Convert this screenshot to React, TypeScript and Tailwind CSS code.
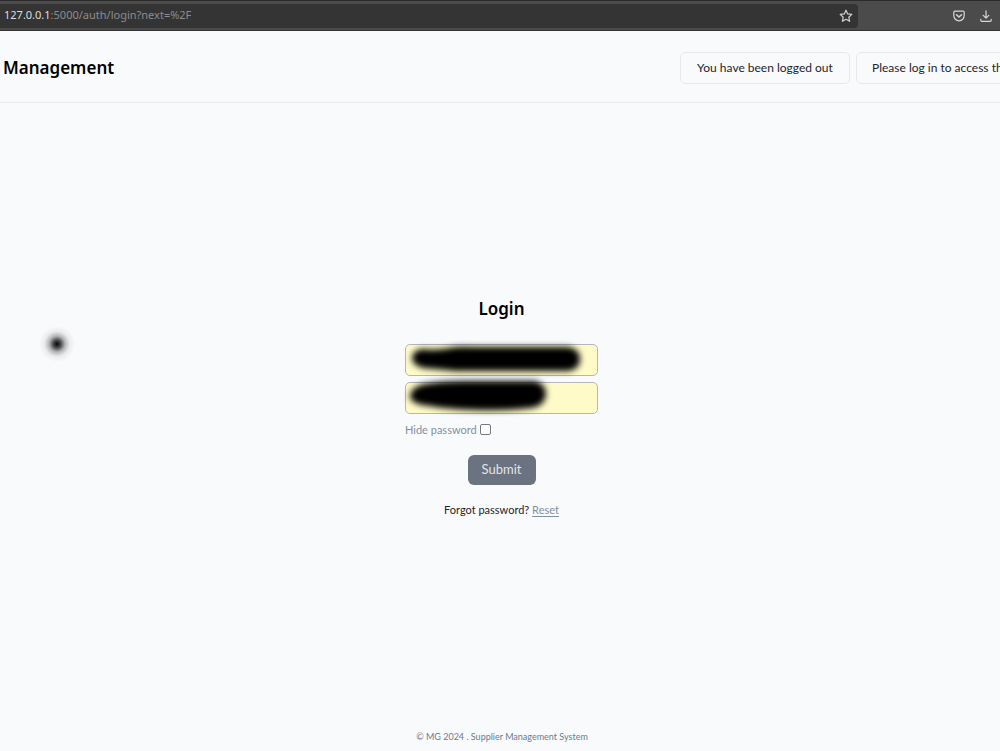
import { useState } from "react";

function StarIcon() {
  return (
    <svg width="14" height="14" viewBox="0 0 14 14" fill="none" stroke="#d2d2d2" strokeWidth="1.2" strokeLinejoin="round" aria-hidden="true">
      <path d="M7 1.2 8.7 4.9 12.8 5.4 9.8 8.2 10.6 12.3 7 10.3 3.4 12.3 4.2 8.2 1.2 5.4 5.3 4.9Z" />
    </svg>
  );
}

function PocketIcon() {
  return (
    <svg width="12" height="12" viewBox="0 0 12 12" fill="none" stroke="#d8d8d8" strokeWidth="1.2" strokeLinecap="round" strokeLinejoin="round" aria-hidden="true">
      <path d="M2 1.2H10Q11.2 1.2 11.2 2.4V5.6A5.2 5.2 0 0 1 .8 5.6V2.4Q.8 1.2 2 1.2Z" />
      <path d="M3.5 4.7 6 7 8.5 4.7" strokeWidth="1.5" />
    </svg>
  );
}

function DownloadIcon() {
  return (
    <svg width="12" height="12" viewBox="0 0 12 12" fill="none" stroke="#d8d8d8" strokeWidth="1.2" strokeLinecap="round" strokeLinejoin="round" aria-hidden="true">
      <path d="M6 .8V8M3.2 5.4 6 8.2 8.8 5.4M.8 9.3V10.2Q.8 11.3 1.9 11.3H10.1Q11.2 11.3 11.2 10.2V9.3" />
    </svg>
  );
}

function BrowserBar() {
  return (
    <div className="flex h-[31px] shrink-0 items-center border-t border-b border-t-[#2b2b2b] border-b-[#333333] bg-[#4b4b4b] font-['Noto_Sans',sans-serif]">
      <div className="flex h-6 min-w-0 flex-1 items-center justify-between rounded-r bg-[#343434] pr-[5px] pl-1">
        <span className="text-[11px] text-[#8c8c8c]">
          <span className="text-[#dedede]">127.0.0.1</span>:5000/auth/login?next=%2F
        </span>
        <button type="button" aria-label="Bookmark this page">
          <StarIcon />
        </button>
      </div>
      <div className="flex w-[142px] shrink-0 items-center justify-end gap-[15px] pr-2">
        <button type="button" aria-label="Save to Pocket">
          <PocketIcon />
        </button>
        <button type="button" aria-label="Downloads">
          <DownloadIcon />
        </button>
      </div>
    </div>
  );
}

export default function App() {
  const [hidden, setHidden] = useState(false);

  return (
    <div className="relative flex min-h-screen flex-col overflow-hidden bg-[#f9fafc] font-[Lato,sans-serif] text-[#1f2329]">
      <BrowserBar />
      <header className="flex h-[72px] shrink-0 items-center justify-between overflow-hidden border-b border-[#e9ebee] pt-[3px] pl-[3px]">
        <h1 className="font-['Noto_Sans',sans-serif] text-[17px] font-semibold text-black">Management</h1>
        <div className="flex w-80 shrink-0 gap-1.5 text-xs whitespace-nowrap">
          <p className="flex h-8 w-[170px] shrink-0 items-center justify-center rounded-[5px] border border-[#e7e9ec]">
            You have been logged out
          </p>
          <p className="flex h-8 shrink-0 items-center rounded-[5px] border border-[#e7e9ec] px-[15px]">
            Please log in to access this page.
          </p>
        </div>
      </header>

      <main className="flex flex-1 flex-col items-center justify-center pb-3 pl-[3px]">
        <form className="flex w-[193px] flex-col items-center" onSubmit={(e) => e.preventDefault()}>
          <h2 className="mb-[21px] font-['Noto_Sans',sans-serif] text-[17px] leading-7 font-semibold text-black">Login</h2>
          <div className="relative mb-1.5 w-full">
            <input
              type="text"
              aria-label="Email"
              className="block h-8 w-full rounded-[5px] border border-[#b4b6bb] bg-[#fffbc8] px-2 text-xs"
            />
            <svg className="pointer-events-none absolute inset-0 size-full overflow-visible" viewBox="0 0 193 32" aria-hidden="true">
              <g className="blur-[3px]">
                <path d="M17 5Q30 7 45 4Q52 2 70 3H163Q175 5 175 15T163 27H50Q30 25 18 24Q7 21 7 14T17 5Z" />
              </g>
            </svg>
          </div>
          <div className="relative mb-[7px] w-full">
            <input
              type={hidden ? "password" : "text"}
              aria-label="Password"
              className="block h-8 w-full rounded-[5px] border border-[#b4b6bb] bg-[#fffbc8] px-2 text-xs"
            />
            <svg className="pointer-events-none absolute inset-0 size-full overflow-visible" viewBox="0 0 193 32" aria-hidden="true">
              <g className="blur-[3px]">
                <path d="M20 2Q35 -1 60 -1H130Q141 2 141 12Q140 24 126 26Q100 29 70 28Q40 27 25 24Q5 22 5 14Q6 5 20 2Z" />
              </g>
            </svg>
          </div>
          <label className="mb-4 flex items-center gap-[3px] self-start text-[11px] leading-[18px] text-[#8290a3]">
            Hide password
            <input
              type="checkbox"
              checked={hidden}
              onChange={(e) => setHidden(e.target.checked)}
              className="size-[11px] appearance-none rounded-[2px] border border-[#777785] bg-white checked:bg-gray-500"
            />
          </label>
          <button type="submit" className="mb-4 h-[30px] w-[68px] rounded-md bg-[#6b7280] text-[13px] text-[#e3e5e8]">
            Submit
          </button>
          <p className="text-[11px] leading-[18px] whitespace-nowrap">
            Forgot password?{" "}
            <a href="#reset" className="text-[#8290a3] underline underline-offset-2">
              Reset
            </a>
          </p>
        </form>
      </main>

      <footer className="flex h-[29px] shrink-0 items-center justify-center pl-1 text-[9px] text-[#6d7b8e]">
        © MG 2024 . Supplier Management System
      </footer>

      <svg className="pointer-events-none absolute top-[324px] left-[37px] size-10" viewBox="0 0 40 40" aria-hidden="true">
        <defs>
          <radialGradient id="spot">
            <stop offset="0" stopColor="#000" stopOpacity="0.97" />
            <stop offset="0.2" stopColor="#000" stopOpacity="0.72" />
            <stop offset="0.45" stopColor="#000" stopOpacity="0.27" />
            <stop offset="0.7" stopColor="#000" stopOpacity="0.06" />
            <stop offset="1" stopColor="#000" stopOpacity="0" />
          </radialGradient>
        </defs>
        <circle cx="20" cy="20" r="18" fill="url(#spot)" />
      </svg>
    </div>
  );
}
